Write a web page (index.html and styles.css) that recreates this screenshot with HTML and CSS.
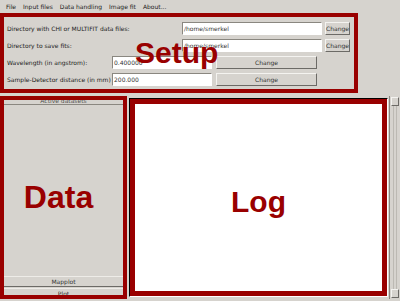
FILE: index.html
```
<!DOCTYPE html>
<html>
<head>
<meta charset="utf-8">
<link rel="stylesheet" href="styles.css">
</head>
<body>
<div class="app">
  <div class="menubar">
    <span class="menu">File</span>
    <span class="menu">Input files</span>
    <span class="menu">Data handling</span>
    <span class="menu">Image fit</span>
    <span class="menu">About...</span>
  </div>
  <div class="setup-wrap">
    <div class="setup">
      <div class="row row-a">
        <span class="label">Directory with CHI or MULTIFIT data files:</span>
        <span class="input wide">/home/smerkel</span>
        <span class="btn small">Change</span>
      </div>
      <div class="row row-a">
        <span class="label">Directory to save fits:</span>
        <span class="input wide">/home/smerkel</span>
        <span class="btn small">Change</span>
      </div>
      <div class="row row-b">
        <span class="label">Wavelength (in angstrom):</span>
        <span class="input mid">0.400000</span>
        <span class="btn large">Change</span>
      </div>
      <div class="row row-b">
        <span class="label">Sample-Detector distance (in mm)</span>
        <span class="input mid">200.000</span>
        <span class="btn large">Change</span>
      </div>
      <div class="big big-setup">Setup</div>
    </div>
  </div>
  <div class="lower">
    <div class="data">
      <div class="tab"><span>Active datasets</span></div>
      <div class="data-body">
        <div class="big big-data">Data</div>
      </div>
      <div class="pbtn">Mapplot</div>
      <div class="pbtn last">Plot</div>
    </div>
    <div class="log-frame">
      <div class="log">
        <div class="big">Log</div>
      </div>
    </div>
    <div class="scroll">
      <div class="arrow"></div>
      <div class="track"></div>
      <div class="arrow"></div>
    </div>
  </div>
</div>
</body>
</html>
```
FILE: styles.css
```
* { box-sizing: border-box; }
html, body { margin: 0; padding: 0; }
body {
  width: 400px;
  height: 301px;
  background: #d6d3ce;
  font-family: "DejaVu Sans", sans-serif;
  font-size: 6px;
  color: #222;
  overflow: hidden;
}
.app { display: flex; flex-direction: column; height: 301px; }
.menubar {
  height: 13px;
  display: flex;
  align-items: center;
  gap: 7px;
  padding-left: 6px;
  padding-bottom: 1px;
}
.setup-wrap { padding-right: 42px; }
.setup {
  position: relative;
  border: 4px solid #990000;
  padding: 5px 4px 1px 3px;
  display: flex;
  flex-direction: column;
  gap: 4px;
  height: 80px;
}
.row { display: flex; align-items: center; height: 13px; }
.label { flex: 1; white-space: nowrap; }
.input {
  height: 13px;
  background: #fff;
  border-top: 1px solid #8a8780;
  border-left: 1px solid #8a8780;
  border-bottom: 1px solid #fff;
  border-right: 1px solid #fff;
  display: flex;
  align-items: center;
  padding-left: 1px;
  color: #333;
}
.wide { width: 140px; }
.mid { width: 100px; }
.btn {
  height: 13px;
  display: flex;
  align-items: center;
  justify-content: center;
  border-top: 1px solid #f4f3f0;
  border-left: 1px solid #f4f3f0;
  border-right: 1px solid #6c6a66;
  border-bottom: 1px solid #6c6a66;
  background: #d6d3ce;
  color: #333;
}
.small { width: 25px; margin-left: 3px; margin-right: 0; }
.large { width: 101px; margin-left: 4px; margin-right: 33px; }
.big {
  font-family: "Liberation Sans", Arial, sans-serif;
  font-weight: bold;
  font-size: 30px;
  color: #990000;
  line-height: 1;
}
.big-setup {
  position: absolute;
  left: 131px;
  top: 21px;
}
.big-data { font-size: 32px; }
.lower {
  flex: 1;
  display: flex;
  padding-top: 3px;
  padding-bottom: 2px;
}
.data {
  width: 127px;
  border: 4px solid #990000;
  display: flex;
  flex-direction: column;
  overflow: hidden;
}
.tab {
  height: 5px;
  overflow: hidden;
  border-bottom: 1px solid #8a8780;
  display: flex;
  justify-content: center;
  align-items: flex-end;
  line-height: 1;
}
.tab span { margin-bottom: 0; color: #555; }
.data-body {
  flex: 1;
  display: flex;
  align-items: center;
  justify-content: center;
  padding-top: 14px;
  padding-right: 10px;
}
.pbtn {
  height: 11px;
  display: flex;
  align-items: center;
  justify-content: center;
  border-top: 1px solid #eeece8;
  border-bottom: 1px solid #6c6a66;
  color: #333;
  margin-top: 1px;
}
.pbtn.last {
  height: 7px;
  align-items: flex-start;
  border-bottom: none;
  padding-top: 1px;
  overflow: hidden;
}
.log-frame {
  width: 259px;
  margin-left: 2px;
  margin-top: 2px;
  margin-bottom: 2px;
  border-top: 1px solid #000;
  border-left: 1px solid #000;
  border-right: 1px solid #fff;
  border-bottom: 1px solid #fff;
  display: flex;
}
.log {
  flex: 1;
  background: #fff;
  border: 5px solid #990000;
  display: flex;
  align-items: center;
  justify-content: center;
  padding-top: 8px;
}
.scroll {
  width: 11px;
  margin-left: 1px;
  display: flex;
  flex-direction: column;
  border-left: 1px solid #8a8780;
  padding: 1px;
  background: #d6d3ce;
}
.arrow {
  height: 9px;
  border-top: 1px solid #f4f3f0;
  border-left: 1px solid #f4f3f0;
  border-right: 1px solid #6c6a66;
  border-bottom: 1px solid #6c6a66;
}
.track { flex: 1; border-left: 1px solid #bcb9b3; border-right: 1px solid #bcb9b3; margin: 0 2px; }
```
